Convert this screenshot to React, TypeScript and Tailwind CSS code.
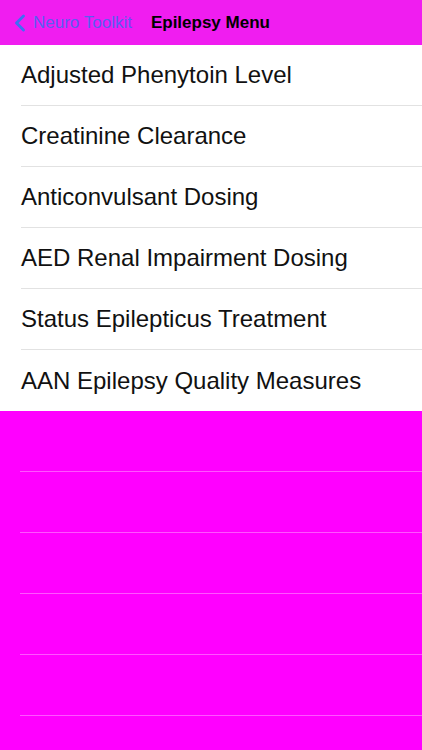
import { ChevronLeft } from 'lucide-react';

const items = [
  'Adjusted Phenytoin Level',
  'Creatinine Clearance',
  'Anticonvulsant Dosing',
  'AED Renal Impairment Dosing',
  'Status Epilepticus Treatment',
  'AAN Epilepsy Quality Measures',
];

export default function App() {
  return (
    <div className="h-[750px] w-[422px] overflow-hidden bg-[#ff00ff] font-['Liberation_Sans',Arial,sans-serif]">
      <header className="flex h-[45px] items-center bg-[#f01df0]">
        <ChevronLeft className="ml-[6px] h-[28px] w-[28px] text-[#3d6ef5]" strokeWidth={2.5} />
        <span className="-ml-[1px] text-[17px] text-[#5a5cf2]">Neuro Toolkit</span>
        <span className="ml-[19px] text-[17px] font-bold text-black">Epilepsy Menu</span>
      </header>
      <ul className="bg-white">
        {items.map((item, i) => (
          <li key={item} className="pl-[21px]">
            <div
              className={
                'flex h-[61px] items-center text-[24px] text-[#111] ' +
                (i < items.length - 1 ? 'border-b border-[#e2e2e2]' : '')
              }
            >
              {item}
            </div>
          </li>
        ))}
      </ul>
      <div>
        {[0, 1, 2, 3, 4].map((n) => (
          <div key={n} className="ml-[20px] h-[61px] border-b border-[#ff55ff]" />
        ))}
      </div>
    </div>
  );
}
